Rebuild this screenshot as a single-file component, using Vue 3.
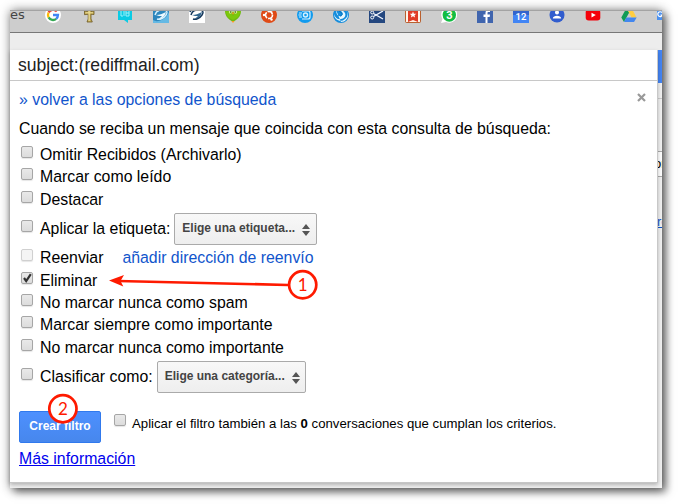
<script setup>
import { ref } from 'vue'

const rows = ref([
  { label: 'Omitir Recibidos (Archivarlo)', size: 'short' },
  { label: 'Marcar como leído', size: 'short' },
  { label: 'Destacar', size: 'mid' },
  { label: 'Aplicar la etiqueta:', size: 'tall', select: 'Elige una etiqueta...' },
  { label: 'Reenviar', size: 'short', link: 'añadir dirección de reenvío', disabled: true },
  { label: 'Eliminar', size: 'mid', checked: true },
  { label: 'No marcar nunca como spam', size: 'short' },
  { label: 'Marcar siempre como importante', size: 'short' },
  { label: 'No marcar nunca como importante', size: 'mid' },
  { label: 'Clasificar como:', size: 'tall', select: 'Elige una categoría...' },
])
</script>

<template>
  <div class="desk">
    <div class="window">
      <div class="bookmarks">
        <span class="crumb">es</span>
        <div class="icons">
          <svg viewBox="0 0 16 16"><circle cx="8" cy="8" r="8" fill="#fff" /><g fill="none" stroke-width="2.3"><path d="M11.8 4.5A5 5 0 0 0 3.6 5.6" stroke="#ea4335" /><path d="M3.6 5.6a5 5 0 0 0 0 4.8" stroke="#fbbc05" /><path d="M3.6 10.4a5 5 0 0 0 7.6 1.4" stroke="#34a853" /><path d="M11.2 11.8A5 5 0 0 0 13 8H8" stroke="#4285f4" /></g></svg>
          <svg viewBox="0 0 16 16"><path d="M6.500 0h3.500v4.500l3-.5v3.500l-3-.3V12l1.300 3H6l1.200-3V7.200l-3.700.5V4l3 .5z" fill="#c4ad57" stroke="#6c5823" stroke-width=".8" /><path d="M7.500 1h1.300v13H7.500zM4.500 5.300h7.500v1H4.500z" fill="#eadb96" /></svg>
          <svg viewBox="0 0 16 16"><path d="M1 1h14v12h-4v3l-4-3H1z" fill="#0bcbe4" /><path d="M4 3v6h2M7 4v5M9 3v6h3V3M9 6h3" fill="none" stroke="#9ff0fa" /></svg>
          <svg viewBox="0 0 16 16"><rect width="16" height="16" rx="1" fill="#2c86bd" /><path d="M0 13c4 3 13 0 16-8v11H0z" fill="#65b9e4" /><path d="M2 8C3 4 6 3 9 3c5 0 6 2 4 5s-6 5-9 4" fill="none" stroke="#d6f2ff" stroke-width="1.400" /><path d="M3 8c4 0 6-1 10-3-1 4-4 7-8 7 2-1 3-2 4-3-2 0-4 0-6-1z" fill="#eefaff" /></svg>
          <svg viewBox="0 0 16 16"><path fill="#fff" d="M0 0h16v16H0z" /><path d="M2 8C3 4 6 3 9 3c5 0 6 2 4 5s-6 5-9 4M1 5c2-4 12-5 13-1" fill="none" stroke="#14365a" stroke-width="1.500" /><path d="M3 8c4 0 6-1 10-3-1 4-4 7-8 7 2-1 3-2 4-3-2 0-4 0-6-1z" fill="#32678f" /></svg>
          <svg viewBox="0 0 16 16"><path d="m0 4 3-2 5 3 5-3 3 2c0 4-2 7-5 9l-3 2-3-2C2 11 0 8 0 4z" fill="#6eb812" /><path d="m0 4 5 1 3 4 3-4 5-1-3 6-5 3-5-3z" fill="#7cc80c" /><circle cx="5.500" cy="5" r="1.700" fill="#d5ed8f" /><circle cx="10.500" cy="5" r="1.700" fill="#d5ed8f" /><circle cx="5.700" cy="5" r=".8" fill="#31581b" /><circle cx="10.300" cy="5" r=".8" fill="#31581b" /><path d="m7 6 1-1 1 1-1 2zM6.500 14h3L8 16z" fill="#ff9b20" /></svg>
          <svg viewBox="0 0 16 16"><circle cx="8" cy="8" r="8" fill="#df4a16" /><circle cx="8" cy="8" r="3.500" fill="none" stroke="#fff" stroke-width="1.600" stroke-dasharray="6.300 1.030" /><g fill="#fff"><circle cx="3" cy="8" r="1.200" /><circle cx="10.500" cy="3.500" r="1.200" /><circle cx="10.500" cy="12.500" r="1.200" /></g></svg>
          <svg viewBox="0 0 16 16"><circle cx="8" cy="8" r="8" fill="#129bee" /><g fill="none" stroke="#d5f2ff"><circle cx="8.500" cy="8" r="2" stroke-width="1.400" /><path d="M5 4h6q2 0 2 2v4q0 2-2 2H5M2 6h3M1.500 8h3M2 10h3" stroke-width="1.200" /></g></svg>
          <svg viewBox="0 0 16 16"><circle cx="8" cy="8" r="8" fill="#168ddc" /><path d="M3 3c0 4 2 7 5 6 4-2 0-5-1-6 7 1 7 8 1 9-4 1-6-2-7-5 0 6 7 9 11 5 4-3 3-8-1-11 7 5 4 14-3 14" fill="#e8f8ff" /><path d="M6 4c4 2 4 5 1 5" fill="none" stroke="#0874bd" /></svg>
          <svg viewBox="0 0 16 16"><path fill="#24477f" d="M0 0h16v16H0z" /><path d="m4.500 9.500 9.500-5.500M4.500 6.500 14 12" stroke="#f3f7ff" stroke-width="1.300" /><circle cx="3.200" cy="5.500" r="1.500" fill="none" stroke="#fff" /><circle cx="3.200" cy="10.500" r="1.500" fill="none" stroke="#fff" /></svg>
          <svg viewBox="0 0 16 16"><rect width="16" height="16" rx="2" fill="#b9602f" /><path d="M1 1h14v14H1z" fill="#fff4e9" /><path d="M3 0h10v15l-5-2-5 2z" fill="#e13d27" /><path d="m8 4.500.9 2.300h2.400L9.500 8.300l.6 2.300L8 9.200l-2.100 1.400.6-2.300-1.800-1.500h2.400z" fill="#fff" /></svg>
          <svg viewBox="0 0 16 16"><path d="m0 16 1.500-4A8 8 0 1 1 5 15z" fill="#fff" /><circle cx="8.300" cy="8" r="6.700" fill="#12bd43" /><text x="8.300" y="12" text-anchor="middle" font-size="11" font-weight="700" fill="#fff">3</text></svg>
          <svg viewBox="0 0 16 16"><path fill="#4065ae" d="M0 0h16v16H0z" /><path d="M8.500 16v-6H6.500V7.500h2V6c0-2.500 1.500-4 4.500-3.500V5h-1.300c-1 0-1.200.5-1.200 1.200v1.300H13l-.3 2.500h-2.200v6z" fill="#fff" /></svg>
          <svg viewBox="0 0 16 16"><path fill="#3264cd" d="M0 0h16v10H0z" /><path fill="#4285f4" d="M0 8h16v8H0z" /><text x="8" y="12.500" text-anchor="middle" font-size="9.500" font-weight="600" fill="#fff">12</text></svg>
          <svg viewBox="0 0 16 16"><circle cx="8" cy="8" r="7.500" fill="#315dce" /><circle cx="8" cy="5.500" r="2" fill="#fff" /><path d="M3.800 11.500C4 7.700 12 7.700 12.200 11.500z" fill="#fff" /></svg>
          <svg viewBox="0 0 16 16"><rect x=".7" y="2.500" width="14.600" height="11" rx="3" fill="#f40009" /><path d="m6.500 5.700 4.300 2.400-4.300 2.400z" fill="#fff" /></svg>
          <svg viewBox="0 0 16 16"><path d="m5.500 1 2.700 4.500L3 15 .3 10.500z" fill="#119b57" /><path d="M5.500 1h5l5 9.500h-5z" fill="#ffcd40" /><path d="M5.300 10.500h10.400L13 15H3z" fill="#4387ef" /></svg>
          <svg viewBox="0 0 16 16"><path d="M0 0h16v13H0z" fill="#4c91ef" /><path d="M5 5.500a2.400 2.400 0 1 0 .5 2.500H3.500" fill="none" stroke="#fff" stroke-width="1.200" /></svg>
        </div>
      </div>
      <div class="toolbar"></div>
      <div class="content">
        <main class="main">
          <div class="search">subject:(rediffmail.com)</div>
          <section class="filter">
            <header class="head">
              <a>» volver a las opciones de búsqueda</a>
              <svg class="close" viewBox="0 0 9 9"><path d="m1 1 7 7M8 1 1 8" /></svg>
            </header>
            <p class="intro">Cuando se reciba un mensaje que coincida con esta consulta de búsqueda:</p>
            <div v-for="row in rows" :key="row.label" class="row" :class="row.size">
              <span class="box" :class="{ disabled: row.disabled }">
                <svg v-if="row.checked" viewBox="0 0 12 12"><path d="m3 6 2.200 3L9.800 2.200" /></svg>
              </span>
              <span class="label">{{ row.label }}</span>
              <a v-if="row.link" class="forward">{{ row.link }}</a>
              <span v-if="row.select" class="select">
                {{ row.select }}
                <svg viewBox="0 0 8 12"><path d="m0 5 4-5 4 5zM0 7h8l-4 5z" /></svg>
              </span>
            </div>
            <div class="actions">
              <span class="create">Crear filtro</span>
              <span class="box"></span>
              <span class="also">Aplicar el filtro también a las <b>0</b> conversaciones que cumplan los criterios.</span>
            </div>
            <a class="more">Más información</a>
          </section>
        </main>
        <aside class="edge">
          <div class="blue"></div>
          <div class="gap"></div>
          <div class="field">or</div>
          <div class="clip">re</div>
        </aside>
      </div>
    </div>
    <svg class="notes" viewBox="0 0 678 504">
      <path d="m288 285-170-4" class="line" />
      <path d="m109 280.500 15-5.500-3.500 6 2.800 5.500z" fill="#fe1a00" />
      <circle cx="302.700" cy="284.800" r="13.600" />
      <text x="302.700" y="291">1</text>
      <circle cx="62.900" cy="408.700" r="13.600" />
      <text x="62.900" y="415">2</text>
    </svg>
  </div>
</template>

<style>
body { background: #fff; overflow: hidden; }
</style>

<style scoped>
* { box-sizing: border-box; }
.desk { position: relative; width: 678px; height: 504px; padding: 10px 16px 16px 10px; overflow: hidden; font-family: "Liberation Sans", Arial, sans-serif; color: #000; }
.window { width: 652px; height: 478px; display: flex; flex-direction: column; background: #fff; box-shadow: 4px 4px 8px rgba(0,0,0,.5), 0 0 10px rgba(0,0,0,.42); }
.bookmarks { height: 23px; flex: none; display: flex; align-items: flex-start; overflow: hidden; background: #cdcdcd; border-top: 1px solid #a3a3a3; border-bottom: 1px solid #777; }
.crumb { width: 35px; flex: none; font: 13px/16px "DejaVu Sans", sans-serif; color: #444; margin-top: -4px; }
.icons { display: flex; gap: 20px; margin-top: -4px; }
.icons svg { width: 16px; height: 16px; flex: none; font-family: Roboto, sans-serif; }
.toolbar { height: 17px; flex: none; background: #ededed; }
.content { display: flex; flex: 1; background: #f1f1f1; }
.main { width: 648px; height: 433px; flex: none; display: flex; flex-direction: column; background: #fff; border-right: 1px solid #c8c8c8; border-bottom: 1px solid #c6c6c6; box-shadow: 0 2px 4px rgba(0,0,0,.25); z-index: 1; }
.search { height: 31px; flex: none; padding-left: 8px; border-bottom: 1px solid #c8c8c8; font-size: 17.600px; line-height: 31px; color: #222; }
.filter { padding: 8px 11px 0 9px; font-size: 15.850px; white-space: nowrap; }
.head { display: flex; align-items: flex-start; justify-content: space-between; height: 29px; line-height: 22px; }
a { color: #1155cc; }
.close { width: 9px; height: 9px; margin-top: 4px; }
.close path { stroke: #999; stroke-width: 2.200; }
.intro { margin: 0; height: 26px; line-height: 22px; }
.row { display: flex; align-items: center; padding-left: 2px; }
.short { height: 22px; }
.mid { height: 23px; }
.tall { height: 36px; }
.box { width: 12px; height: 12px; flex: none; border: 1px solid #a6a6a6; border-radius: 2px; background: linear-gradient(#e9e9e9, #dcdcdc); box-shadow: 0 1px 1px rgba(0,0,0,.1); }
.row .box { margin: 0 7px 6px 0; }
.box svg { display: block; width: 12px; height: 12px; margin: -1px; fill: none; stroke: #333; stroke-width: 2.200; }
.disabled { border-color: #d0d0d0; background: #f4f4f4; }
.forward { margin-left: 19px; }
.select { display: flex; align-items: center; gap: 7px; height: 32px; margin: 0 0 0 4px; padding: 0 5.500px 2px 7px; border: 1px solid #aaa; border-radius: 2px; background: linear-gradient(#f8f8f8, #eee); color: #444; font-size: 12px; font-weight: 700; }
.select svg { width: 8px; height: 12px; fill: #555; margin-top: 3px; }
.actions { display: flex; height: 32px; margin-top: 16px; }
.create { width: 82px; height: 32px; text-align: center; line-height: 29px; font-size: 12px; font-weight: 700; color: #fff; background: linear-gradient(#4d90fe, #4787ed); border: 1px solid #3079ed; border-radius: 2px; }
.actions .box { margin: 3px 6px 0 13px; }
.also { font-size: 13.200px; line-height: 26px; }
.more { display: inline-block; color: #0000ee; text-decoration: underline; line-height: 22px; margin-top: 5px; }
.edge { width: 4px; display: flex; flex-direction: column; overflow: hidden; }
.blue { height: 33px; flex: none; background: #4384f3; }
.gap { height: 68px; flex: none; background: linear-gradient(#f1f1f1 15px, #ccc 15px, #ccc 16px, #f1f1f1 16px); }
.field { height: 26px; flex: none; background: #fff; border: 1px solid #aaa; border-width: 1px 0; font-size: 13px; line-height: 24px; text-indent: -4px; }
.clip { margin-top: 37px; height: 16px; font-size: 13px; line-height: 16px; color: #1155cc; text-decoration: underline; text-indent: -1px; }
.notes { position: absolute; inset: 0; width: 678px; height: 504px; z-index: 3; }
.notes circle { fill: #fff; stroke: #fe1a00; stroke-width: 2.700; }
.notes .line { stroke: #fe1a00; stroke-width: 2.700; }
.notes text { font: 17px Lato, sans-serif; fill: #fe1a00; text-anchor: middle; }
</style>
